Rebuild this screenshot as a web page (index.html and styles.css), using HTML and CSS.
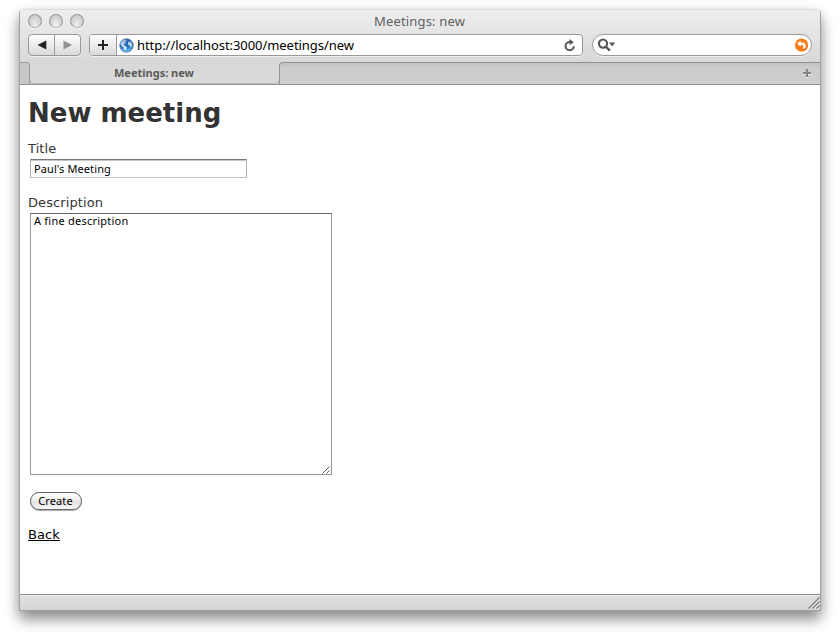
FILE: index.html
```html
<!DOCTYPE html>
<html lang="en">
<head>
<meta charset="utf-8">
<title>Meetings: new</title>
<link rel="stylesheet" href="styles.css">
</head>
<body>
<div class="window">
  <header class="chrome">
    <div class="titlebar">
      <div class="lights"><i></i><i></i><i></i></div>
      <span class="window-title">Meetings: new</span>
    </div>
    <div class="toolbar">
      <div class="nav">
        <span class="nav-button"><svg width="10" height="10" viewBox="0 0 10 10"><path d="M0.5 5 9.3 0.6V9.4Z" fill="#222"/></svg></span>
        <span class="nav-button"><svg width="10" height="10" viewBox="0 0 10 10"><path d="M9 5 .5 .6V9.4Z" fill="#929292"/></svg></span>
      </div>
      <div class="address">
        <span class="add"><svg width="10" height="10" viewBox="0 0 10 10"><path d="M5 0v10M0 5h10" stroke="#222" stroke-width="2"/></svg></span>
        <svg class="globe" width="15" height="15" viewBox="0 0 15 15">
          <defs>
            <linearGradient id="sea" x1="0" y1="0" x2="0" y2="1"><stop offset="0" stop-color="#2861a5"/><stop offset=".5" stop-color="#1e6bbd"/><stop offset="1" stop-color="#73c4f3"/></linearGradient>
            <linearGradient id="land" x1="0" y1="0" x2="0" y2="1"><stop offset="0" stop-color="#8fb3db"/><stop offset=".6" stop-color="#eef6fd"/></linearGradient>
          </defs>
          <circle cx="7.5" cy="7.5" r="6.8" fill="url(#sea)" stroke="#4775a9" stroke-width=".7"/>
          <path d="M2 4 4.2 2 7.2 1.6 7.8 2.8 6.3 4 6.4 5.2 4.5 6.4 5 7.4 7 8.2 7.6 9.8 6.5 12.5 5.2 11.6 4.7 9.3 2.3 7.6 1.4 6ZM9.4 4 11.4 3.3 13 6.2 12.8 8.6 11.8 9.6 10.8 7.6 9.3 6.9 8.8 5.2Z" fill="url(#land)" opacity=".9"/>
        </svg>
        <span class="url">http://localhost:3000/meetings/new</span>
        <svg class="reload" width="12" height="13" viewBox="0 0 12 13"><path d="M6.8 3H5.5A4.1 4.1 0 1 0 9.8 7.2" fill="none" stroke="#555" stroke-width="2"/><path d="M5.5 0 9.8 3.2 5.5 6Z" fill="#555"/></svg>
      </div>
      <div class="search">
        <svg width="19" height="14" viewBox="0 0 19 14"><circle cx="6" cy="5.6" r="4.1" fill="none" stroke="#555" stroke-width="2.1"/><path d="m8.8 8.6 4.1 4" stroke="#555" stroke-width="2.3"/><path d="M12.2 4.4h6l-3 4Z" fill="#555"/></svg>
        <svg class="snapback" width="14" height="14" viewBox="0 0 14 14"><circle cx="6.6" cy="7" r="6.6" fill="#fa7c10"/><path d="M2.1 5.5 5.6 2.5V4.6H7.1C9.6 4.6 10.8 6 10.8 7.7 10.8 9.8 9.2 11 7.5 11 8.8 9.6 8.6 7 6.8 7H5.6V8.8Z" fill="#fff"/></svg>
      </div>
    </div>
    <div class="tabs">
      <span class="tab-edge"></span>
      <span class="tab">Meetings: new</span>
      <span class="tab-rest"><svg width="8" height="9" viewBox="0 0 8 9"><path d="M4 1v8M0 5h8" stroke="#eee" stroke-width="2"/><path d="M4 0v8M0 4h8" stroke="#858585" stroke-width="2"/></svg></span>
    </div>
  </header>
  <main class="page">
    <h1>New meeting</h1>
    <form>
      <label class="label-title" for="title">Title</label>
      <input id="title" type="text" value="Paul's Meeting">
      <label class="label-description" for="description">Description</label>
      <div class="textarea-wrap">
        <textarea id="description">A fine description</textarea>
        <svg class="area-grip" width="8" height="8" viewBox="0 0 8 8"><path d="M.5 7.5l7-7M4.5 7.5l3-3" stroke="#555" stroke-width=".9"/></svg>
      </div>
      <button type="button">Create</button>
    </form>
    <a class="back" href="#">Back</a>
  </main>
  <footer class="status"><svg width="12" height="12" viewBox="0 0 12 12"><path d="M1.5 12 12 1.5M5.5 12 12 5.5M9.5 12 12 9.5" stroke="#f5f5f5"/><path d="M.5 11.5l11-11M4.5 11.5l7-7M8.5 11.5l3-3" stroke="#777" stroke-width="1.1"/></svg></footer>
</div>
</body>
</html>
```
FILE: styles.css
```css
* { box-sizing: border-box; }
body { margin: 0; padding: 9px 19px; height: 640px; overflow: hidden; background: #fff; font-family: "DejaVu Sans", sans-serif; }
svg { display: block; flex: none; }
.window {
  width: 802px; height: 602px; display: flex; flex-direction: column;
  border: 1px solid #a0a0a0; border-top-color: #dcdcdc; border-radius: 5px 5px 0 0;
  background: #fff; box-shadow: 0 9px 14px rgba(0,0,0,.38), 0 3px 14px rgba(0,0,0,.13);
}
.chrome { height: 75px; background: linear-gradient(#eee, #d8d8d8 52px, #dadada); border-radius: 4px 4px 0 0; }
.titlebar { height: 24px; display: grid; grid-template-columns: 1fr auto 1fr; align-items: center; }
.lights { display: flex; gap: 7px; padding: 0 0 2px 8px; }
.lights i { width: 14px; height: 14px; border-radius: 50%; border: 1px solid #999; border-bottom-color: #b4b4b4; background: radial-gradient(ellipse at 50% 90%, #f3f3f3, #d2d2d2 60%, #bcbcbc); box-shadow: 0 1px 0 #f5f5f5; }
.window-title { font: 13px/18px "Noto Sans", sans-serif; letter-spacing: .17px; color: #606060; padding: 0 1px 3px 0; }
.toolbar { height: 28px; display: flex; padding-left: 8px; }
.nav, .address, .search { height: 22px; border: 1px solid #999; border-radius: 4px; display: flex; align-items: center; box-shadow: 0 1px 0 #eee; }
.nav { width: 53px; background: linear-gradient(#fefefe, #dadada); }
.nav-button { flex: 1; height: 100%; display: flex; align-items: center; justify-content: center; }
.nav-button + .nav-button { border-left: 1px solid #999; }
.address { width: 494px; margin-left: 8px; background: #fff; }
.add { width: 27px; height: 100%; display: flex; align-items: center; justify-content: center; background: linear-gradient(#fefefe, #dadada); border-right: 1px solid #999; border-radius: 3px 0 0 3px; }
.globe { margin-left: 2px; }
.url { font: 13px/18px "Noto Sans", sans-serif; letter-spacing: -.06px; color: #000; margin-left: 3px; white-space: nowrap; }
.reload { margin: 0 6px 0 auto; }
.search { width: 220px; margin-left: 9px; border-radius: 11px; padding: 0 2px 0 4px; justify-content: space-between; background: #fff; }
.tabs { height: 23px; display: flex; border-bottom: 1px solid #929292; }
.tab-edge { width: 10px; background: #c8c8c8; border: solid #999; border-width: 1px 1px 0 0; border-radius: 0 4px 0 0; }
.tab { position: relative; isolation: isolate; width: 249px; padding-right: 1px; font: bold 11px/21px "Noto Sans", sans-serif; color: #5b5b57; text-align: center; background: linear-gradient(transparent 16px, #cbcbcb 16px); }
/* Curved feet where the active tab meets the page */
.tab::before { content: ""; position: absolute; z-index: -1; left: -1px; right: -1px; bottom: 0; height: 8px; border: solid #999; border-width: 0 1px 1px; border-bottom-color: #bbb; border-radius: 0 0 5px 5px; background: #dadada; }
.tab-rest { flex: 1; border: solid #929292; border-width: 1px 0 0 1px; border-radius: 4px 0 0; background: linear-gradient(#c1c1c1, #cbcbcb 4px, #cecece); display: flex; justify-content: flex-end; align-items: center; padding: 0 9px 1px 0; }
.page { flex: 1; padding: 9px 8px 0; color: #333; font-size: 13px; line-height: 18px; }
h1 { margin: 0 0 8px; font-size: 26px; line-height: 38px; }
label { display: block; letter-spacing: .1px; }
input, textarea { display: block; margin: 0; background: #fff; color: #000; border: 1px solid #999; border-top-color: #666; outline: 0; font: 11px/14px "Noto Sans", sans-serif; border-radius: 0; }
input { width: 217px; height: 19px; margin: 1px 0 0 2px; padding: 0 3px 1px; border-color: #777 #b0b0b0 #c3c3c3; box-shadow: inset 0 1px 0 #c6c6c6; letter-spacing: .1px; }
.label-description { margin-top: 16px; }
.textarea-wrap { width: 302px; margin: 1px 0 0 2px; position: relative; }
textarea { width: 302px; height: 262px; padding: 0 3px; resize: none; overflow: hidden; letter-spacing: .23px; }
.area-grip { position: absolute; right: 2px; bottom: 1px; }
button { display: block; width: 52px; height: 18px; margin: 17px 0 0 1.5px; padding: 0 0 1px; border: 1px solid #666; border-radius: 9px; background: linear-gradient(#fff, #eee 48%, #e2e2e2 52%, #f7f7f7); box-shadow: 0 1px 1px #aaa; color: #000; font: 11px/15px "Noto Sans", sans-serif; letter-spacing: .1px; }
.back { display: inline-block; margin-top: 16px; color: #000; text-decoration: underline; letter-spacing: .1px; }
.status { height: 16px; border-top: 1px solid #929292; background: linear-gradient(#eee, #dedede 2px, #d6d6d6); display: flex; justify-content: flex-end; align-items: flex-end; padding: 0 0 1px; }
```
